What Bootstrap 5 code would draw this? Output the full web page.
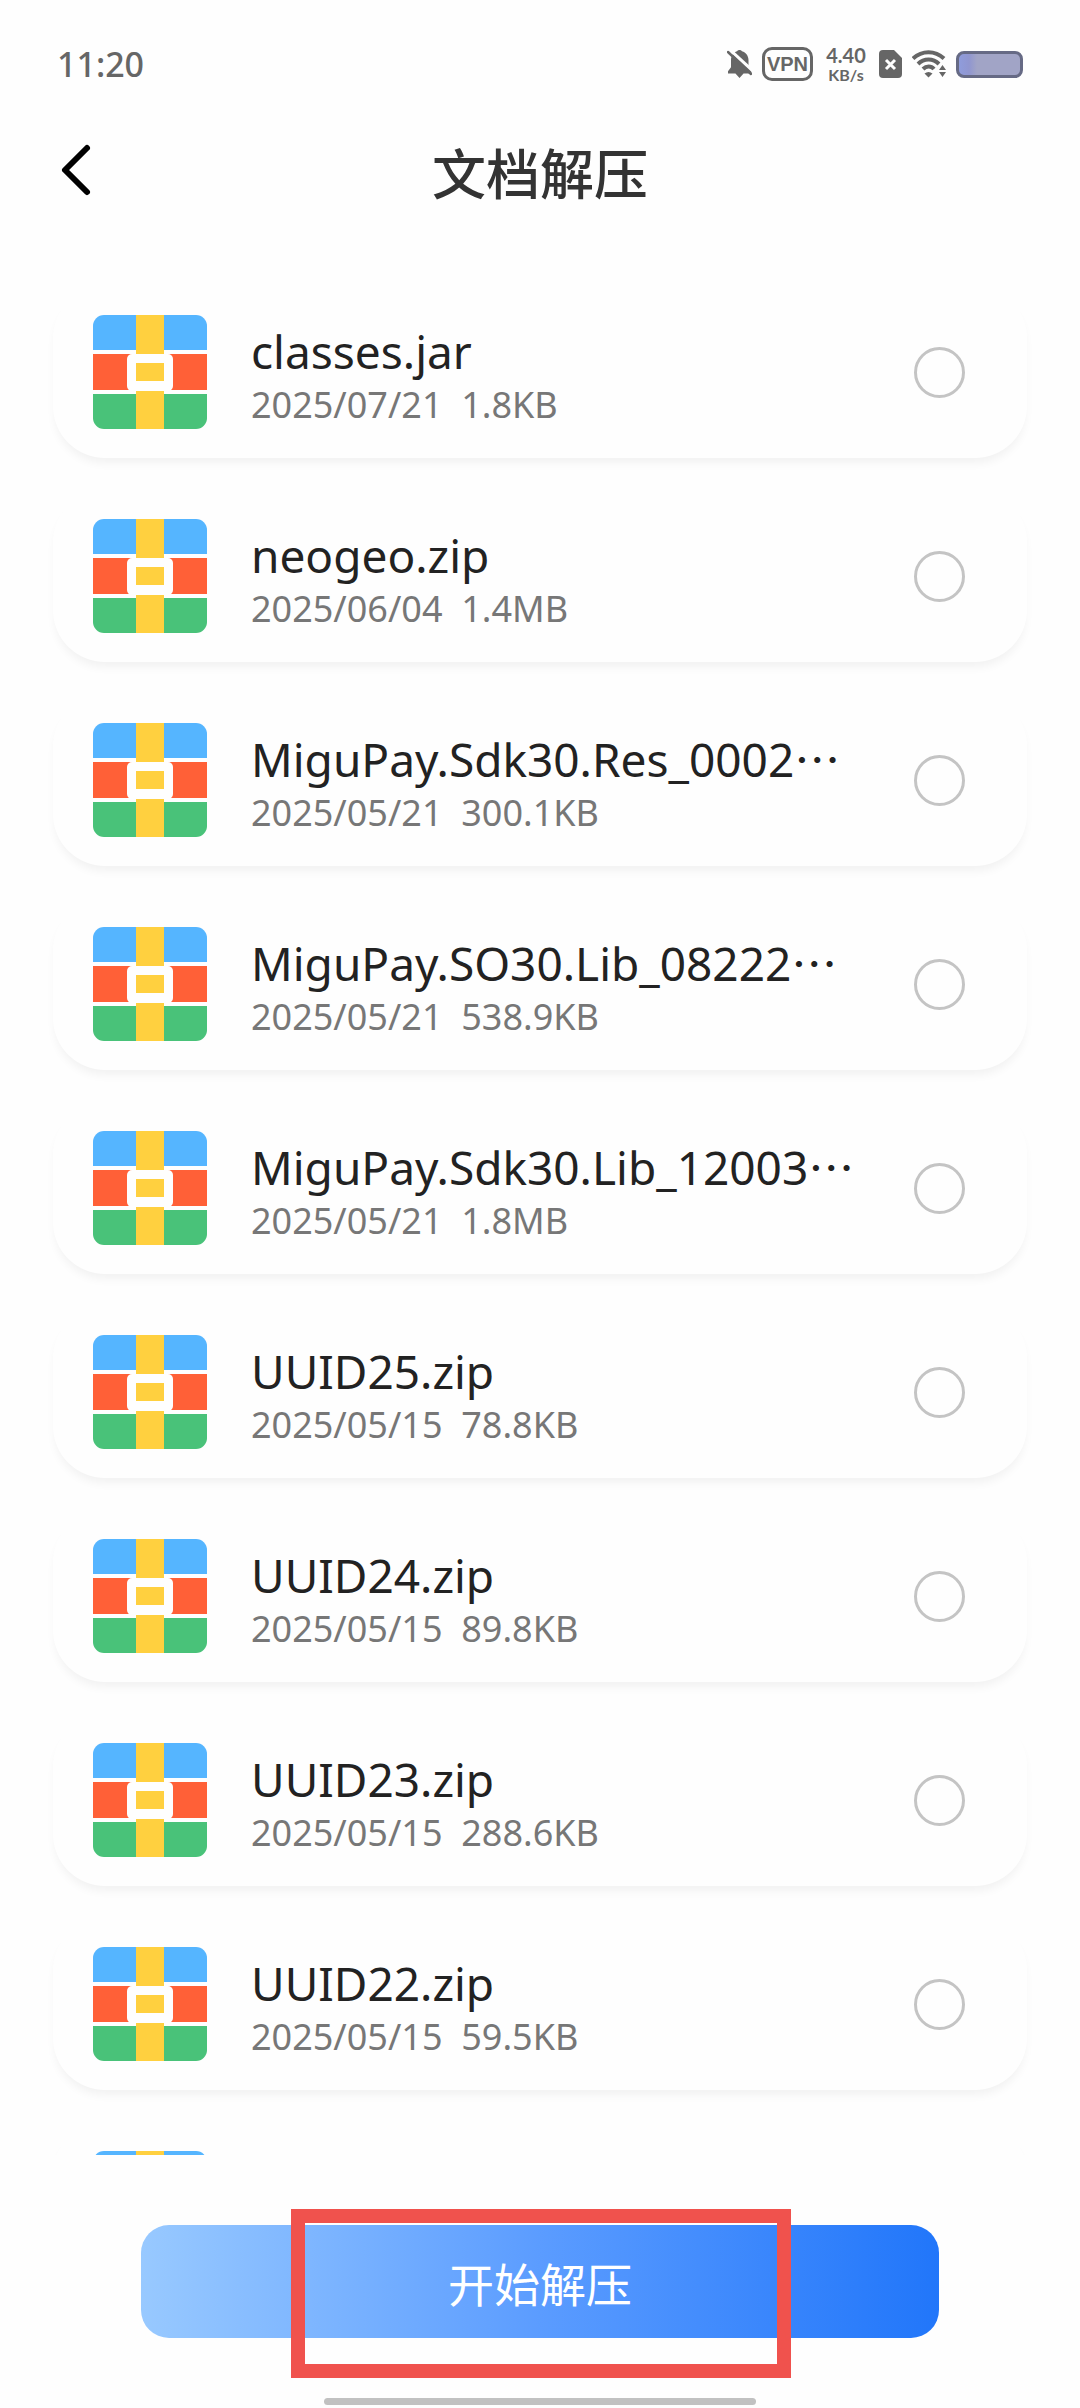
<!DOCTYPE html>
<html lang="zh-CN">
<head>
<meta charset="utf-8">
<meta name="viewport" content="width=device-width, initial-scale=1">
<title>文档解压</title>
<link href="https://cdn.jsdelivr.net/npm/bootstrap@5.3.0/dist/css/bootstrap.min.css" rel="stylesheet">
<style>
  body { background: #fefefe; color: #222; font-family: "Noto Sans", "Noto Sans CJK SC", sans-serif; }
  .status { height: 128px; padding: 0 57px; color: #666; }
  .clock { font-size: 34px; font-weight: 500; line-height: 40px; }
  .status-icons { gap: 10px; }
  .vpn { width: 51px; height: 34px; border: 3px solid #666; border-radius: 10px; font: 700 20px/29px "Liberation Sans", sans-serif; }
  .speed { width: 46px; font-family: Lato, sans-serif; font-weight: 700; }
  .speed-value { font-size: 20px; line-height: 22px; }
  .speed-unit { font-size: 16px; line-height: 18px; }
  .battery { width: 67px; height: 27px; border: 3px solid #666a85; border-radius: 8px; background: linear-gradient(90deg, #8f9cdc 0, #9096d0 10px, #a1a4c6 18px); }
  .topbar { height: 158px; padding: 0 57px 70px; }
  .back { width: 40px; height: 56px; margin-bottom: 4px; }
  .page-title { font: 500 54px/64px "Noto Sans CJK SC", sans-serif; color: #333; }
  .files { min-height: 0; padding: 0 53px; gap: 32px; }
  .file { height: 172px; padding: 0 62px 0 40px; gap: 44px; border: 0; border-radius: 52px; background: #fefefe; box-shadow: 0 7px 10px -2px rgba(0, 0, 0, .05); }
  .archive-icon { width: 114px; height: 114px; border-radius: 11px; }
  .file-info { padding-top: 6px; }
  .file-name { font-size: 46px; line-height: 60px; }
  .file-meta { font-size: 36px; line-height: 48px; color: #777; white-space: pre; }
  .dots { font-family: "Noto Sans CJK SC", sans-serif; line-height: 1; }
  .pick.form-check-input { width: 51px; height: 51px; border: 3px solid #c4c4c4; background-color: transparent; }
  .action { padding: 70px 141px 60px; }
  .start { height: 113px; border: 0; border-radius: 28px; color: #fff; font: 400 46px/64px "Noto Sans CJK SC", sans-serif; background: linear-gradient(90deg, #98c9ff, #5b9cff 50%, #2176fa); }
  .highlight { top: 54px; left: 291px; right: 289px; height: 169px; border: 14px solid #f0524d; pointer-events: none; }
  .home { width: 40%; height: 7px; margin-bottom: 3px; background: #c1c1c1; }
</style>
</head>
<body class="vh-100 d-flex flex-column overflow-hidden">

<svg class="d-none">
  <symbol id="archive" viewBox="0 0 114 114">
    <rect width="114" height="114" fill="#fefefe"/>
    <rect width="114" height="35" fill="#55b5ff"/>
    <rect y="39" width="114" height="36" fill="#ff6037"/>
    <rect y="79" width="114" height="35" fill="#49c279"/>
    <rect x="43" width="28" height="114" fill="#ffd03f"/>
    <rect x="34" y="39" width="46" height="37" rx="5" fill="#fefefe"/>
    <rect x="43" y="48" width="28" height="18" fill="#ffd03f"/>
  </symbol>
</svg>

<header class="flex-shrink-0">
  <div class="status d-flex align-items-center justify-content-between">
    <span class="clock">11:20</span>
    <div class="status-icons d-flex align-items-center">
      <svg width="25" height="30" viewBox="0 0 25 30" fill="#666">
        <path d="M12.500 1a3 3 0 0 1 2.500 1.200c4 1.300 6.500 4.500 6.500 9v7l3 4v2.300H1v-2.300l3-4v-7c0-4.500 2.500-7.700 6-9A3 3 0 0 1 12.500 1zM8 24h9l-4.500 5z"/>
        <path d="M1 -1 27 23" stroke="#fefefe" stroke-width="3"/>
        <path d="M1 3 24 25" stroke="#666" stroke-width="2.500" stroke-linecap="round"/>
      </svg>
      <span class="vpn text-center">VPN</span>
      <div class="speed text-center">
        <div class="speed-value">4.40</div>
        <div class="speed-unit">KB/s</div>
      </div>
      <svg width="23" height="28" viewBox="0 0 23 28">
        <path d="M4 0h11l8 8v16a4 4 0 0 1-4 4H4a4 4 0 0 1-4-4V4a4 4 0 0 1 4-4z" fill="#666"/>
        <path d="m7 10 9 9m0-9-9 9" stroke="#fefefe" stroke-width="3"/>
      </svg>
      <svg width="34" height="28" viewBox="0 0 34 28" fill="none" stroke="#666" stroke-width="4">
        <path d="M1 8.500C10 0 23 0 32 8.500"/>
        <path d="M6 14c6-6 15-6 21 0"/>
        <path d="M11 19c3.500-3.500 8-3.500 11 0"/>
        <path d="m12.500 23.500 4 4 4-4c-2.500-2-5.500-2-8 0z" fill="#666" stroke="none"/>
        <path d="m27 20 3.500-5 3.500 5zM27 22h7l-3.500 5z" fill="#666" stroke="none"/>
      </svg>
      <div class="battery"></div>
    </div>
  </div>
  <nav class="topbar d-flex align-items-center">
    <button class="back btn p-0 border-0 d-flex align-items-center" type="button" aria-label="返回">
      <svg width="40" height="56" viewBox="0 0 40 56" fill="none" stroke="#000" stroke-width="6" stroke-linecap="round" stroke-linejoin="round"><path d="M30 6 8 28l22 22"/></svg>
    </button>
    <h1 class="page-title flex-grow-1 text-center m-0">文档解压</h1>
    <span class="back"></span>
  </nav>
</header>

<main class="files flex-grow-1 overflow-hidden d-flex flex-column">
  <label class="file card flex-row flex-shrink-0 align-items-center">
    <svg class="archive-icon"><use href="#archive"/></svg>
    <span class="file-info flex-grow-1"><span class="file-name d-block text-nowrap">classes.jar</span><span class="file-meta d-block">2025/07/21  1.8KB</span></span>
    <input class="pick form-check-input m-0" type="radio" name="file">
  </label>
  <label class="file card flex-row flex-shrink-0 align-items-center">
    <svg class="archive-icon"><use href="#archive"/></svg>
    <span class="file-info flex-grow-1"><span class="file-name d-block text-nowrap">neogeo.zip</span><span class="file-meta d-block">2025/06/04  1.4MB</span></span>
    <input class="pick form-check-input m-0" type="radio" name="file">
  </label>
  <label class="file card flex-row flex-shrink-0 align-items-center">
    <svg class="archive-icon"><use href="#archive"/></svg>
    <span class="file-info flex-grow-1"><span class="file-name d-block text-nowrap">MiguPay.Sdk30.Res_0002<span class="dots">…</span></span><span class="file-meta d-block">2025/05/21  300.1KB</span></span>
    <input class="pick form-check-input m-0" type="radio" name="file">
  </label>
  <label class="file card flex-row flex-shrink-0 align-items-center">
    <svg class="archive-icon"><use href="#archive"/></svg>
    <span class="file-info flex-grow-1"><span class="file-name d-block text-nowrap">MiguPay.SO30.Lib_08222<span class="dots">…</span></span><span class="file-meta d-block">2025/05/21  538.9KB</span></span>
    <input class="pick form-check-input m-0" type="radio" name="file">
  </label>
  <label class="file card flex-row flex-shrink-0 align-items-center">
    <svg class="archive-icon"><use href="#archive"/></svg>
    <span class="file-info flex-grow-1"><span class="file-name d-block text-nowrap">MiguPay.Sdk30.Lib_12003<span class="dots">…</span></span><span class="file-meta d-block">2025/05/21  1.8MB</span></span>
    <input class="pick form-check-input m-0" type="radio" name="file">
  </label>
  <label class="file card flex-row flex-shrink-0 align-items-center">
    <svg class="archive-icon"><use href="#archive"/></svg>
    <span class="file-info flex-grow-1"><span class="file-name d-block text-nowrap">UUID25.zip</span><span class="file-meta d-block">2025/05/15  78.8KB</span></span>
    <input class="pick form-check-input m-0" type="radio" name="file">
  </label>
  <label class="file card flex-row flex-shrink-0 align-items-center">
    <svg class="archive-icon"><use href="#archive"/></svg>
    <span class="file-info flex-grow-1"><span class="file-name d-block text-nowrap">UUID24.zip</span><span class="file-meta d-block">2025/05/15  89.8KB</span></span>
    <input class="pick form-check-input m-0" type="radio" name="file">
  </label>
  <label class="file card flex-row flex-shrink-0 align-items-center">
    <svg class="archive-icon"><use href="#archive"/></svg>
    <span class="file-info flex-grow-1"><span class="file-name d-block text-nowrap">UUID23.zip</span><span class="file-meta d-block">2025/05/15  288.6KB</span></span>
    <input class="pick form-check-input m-0" type="radio" name="file">
  </label>
  <label class="file card flex-row flex-shrink-0 align-items-center">
    <svg class="archive-icon"><use href="#archive"/></svg>
    <span class="file-info flex-grow-1"><span class="file-name d-block text-nowrap">UUID22.zip</span><span class="file-meta d-block">2025/05/15  59.5KB</span></span>
    <input class="pick form-check-input m-0" type="radio" name="file">
  </label>
  <div class="file card flex-row flex-shrink-0 align-items-center">
    <svg class="archive-icon"><use href="#archive"/></svg>
  </div>
</main>

<footer class="position-relative flex-shrink-0">
  <div class="action"><button class="start btn w-100" type="button">开始解压</button></div>
  <div class="highlight position-absolute"></div>
  <div class="home rounded-pill mx-auto"></div>
</footer>

<script src="https://cdn.jsdelivr.net/npm/bootstrap@5.3.0/dist/js/bootstrap.bundle.min.js"></script>
</body>
</html>
